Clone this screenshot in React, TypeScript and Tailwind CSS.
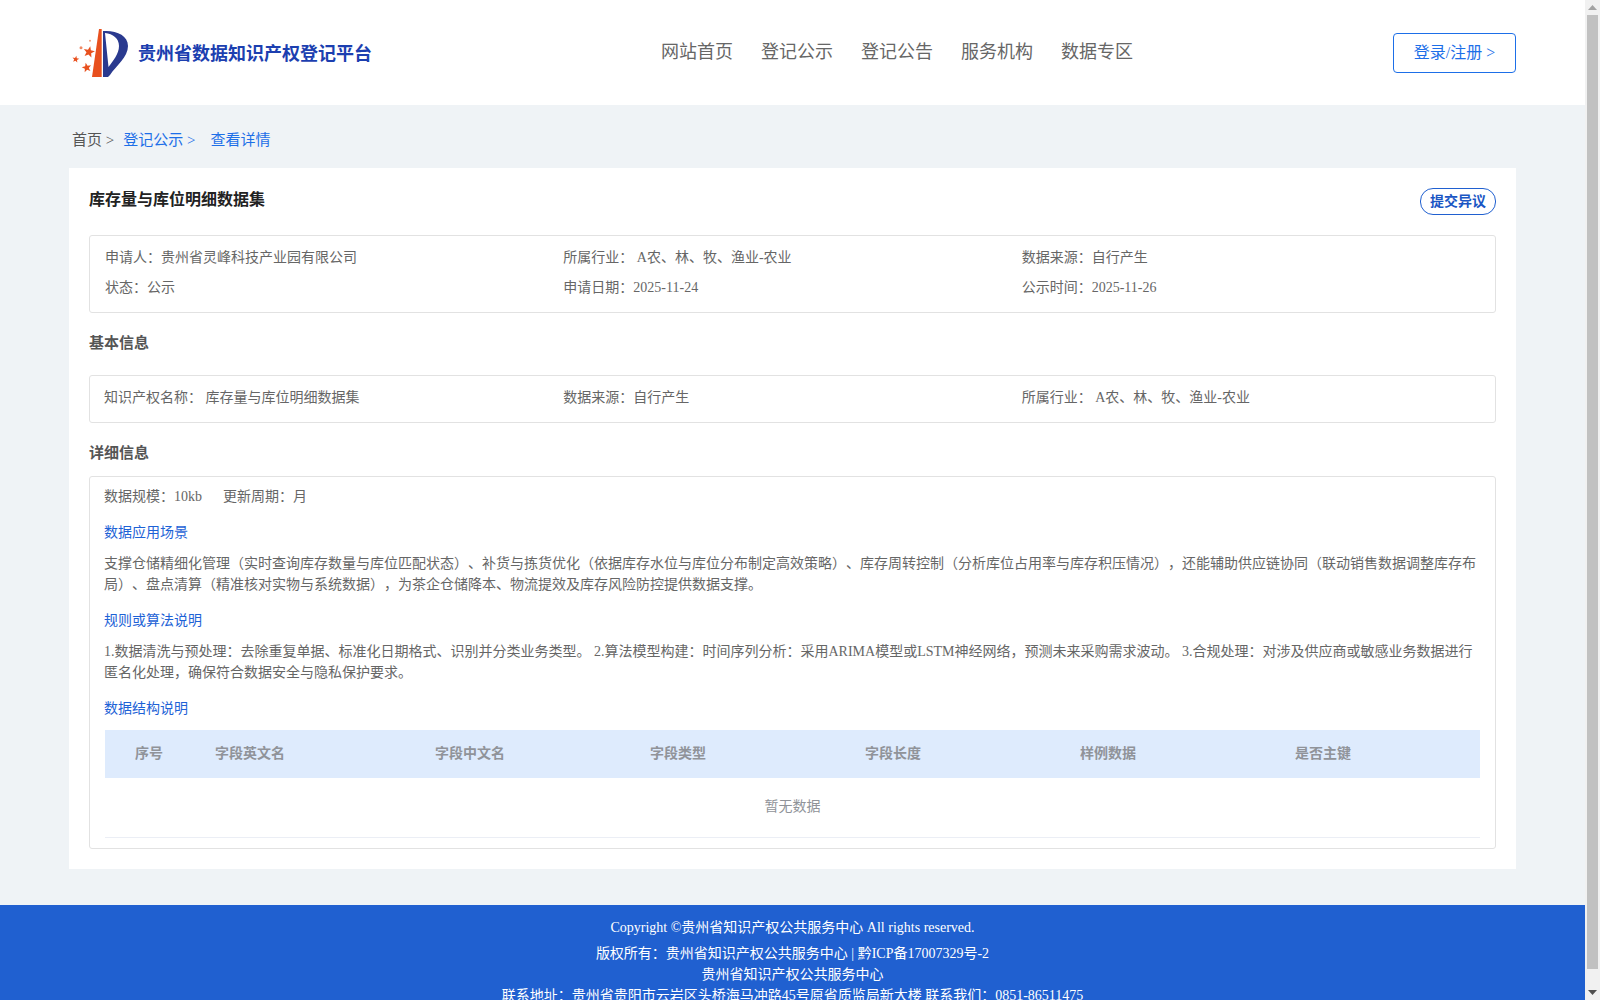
const FONT = "font-['Liberation_Serif','Noto_Sans_CJK_SC',serif]";

function star(cx: number, cy: number, r: number, rot: number) {
  const pts: string[] = [];
  for (let i = 0; i < 10; i++) {
    const rad = i % 2 === 0 ? r : r * 0.42;
    const a = ((-90 + rot + i * 36) * Math.PI) / 180;
    pts.push(`${(cx + rad * Math.cos(a)).toFixed(2)},${(cy + rad * Math.sin(a)).toFixed(2)}`);
  }
  return pts.join(" ");
}

function Logo() {
  return (
    <svg width="60" height="50" viewBox="0 0 60 50" className="shrink-0">
      <path d="M27 1 L29.7 1 L29.7 49 L20 49 Z" fill="#e8501e" />
      <path
        d="M31 3 C44 2 56 7 56 18 C56 29 44 38 38 47 L36 49 L31 49 Z M33 5 L36.5 39 C41 33 47 26 47 18 C47 10 41 6 33 5 Z"
        fillRule="evenodd"
        fill="#2a3a8f"
      />
      <polygon points={star(17, 24, 6, 12)} fill="#e8501e" />
      <polygon points={star(14.7, 39.7, 5, -12)} fill="#e8501e" />
      <polygon points={star(3.7, 31.3, 3.6, 10)} fill="#e8501e" />
      <circle cx="9" cy="19.7" r="1.5" fill="#ef8a66" />
      <circle cx="18" cy="12.7" r="1" fill="#f0a080" />
    </svg>
  );
}

function Scrollbar() {
  return (
    <div className="w-[15px] shrink-0 h-screen bg-[#f1f1f1] flex flex-col">
      <div className="h-[15px] flex items-center justify-center">
        <svg width="9" height="5" viewBox="0 0 9 5">
          <path d="M4.5 0 L9 5 L0 5 Z" fill="#a3a3a3" />
        </svg>
      </div>
      <div className="h-[954px] mx-[2px] bg-[#c1c1c1]" />
      <div className="flex-1 flex items-end justify-center pb-[5px]">
        <svg width="9" height="5" viewBox="0 0 9 5">
          <path d="M0 0 L9 0 L4.5 5 Z" fill="#505050" />
        </svg>
      </div>
    </div>
  );
}

export default function App() {
  return (
    <div className={`h-screen overflow-hidden flex [text-spacing-trim:space-all] ${FONT}`}>
      <div className="flex-1 min-w-0 h-screen overflow-hidden bg-[#eff3f6]">
        <header className="h-[105px] bg-white flex items-center pl-[72px] pr-[69px]">
          <div className="w-[589px] flex items-center gap-[6px]">
            <Logo />
            <span className="text-[18px] font-bold text-[#1c3fb0] mt-[3px]">贵州省数据知识产权登记平台</span>
          </div>
          <nav className="flex gap-7 text-[18px] text-[#666] -mt-[1px]">
            <span>网站首页</span>
            <span>登记公示</span>
            <span>登记公告</span>
            <span>服务机构</span>
            <span>数据专区</span>
          </nav>
          <button className="ml-auto w-[123px] h-10 border border-[#1d6fe8] rounded text-[16px] text-[#1d6fe8]">登录/注册 &gt;</button>
        </header>

        <div className="h-[63px] flex items-center pl-[72px] pt-2 text-[15px] text-[#555]">
          <span>首页 &gt;</span>
          <span className="ml-[9px] text-[#1d6fe8]">登记公示 &gt;</span>
          <span className="ml-[15px] text-[#1d6fe8]">查看详情</span>
        </div>

        <main className="mx-[69px] bg-white px-5 pt-5 pb-5 h-[701px]">
          <div className="flex justify-between h-[47px]">
            <h1 className="text-[16px] font-bold text-[#222] leading-5 pt-[2px]">库存量与库位明细数据集</h1>
            <button className="w-[76px] h-[27px] border border-[#2060d0] rounded-[13px] text-[14px] font-bold text-[#1a56c4]">提交异议</button>
          </div>

          <div className="h-[78px] border border-[#e2e2e2] rounded-[3px] px-[15px] pt-[12px] text-[14px] text-[#666]">
            <div className="grid grid-cols-3 h-[30px] leading-5">
              <span>申请人：贵州省灵峰科技产业园有限公司</span>
              <span>所属行业： A农、林、牧、渔业-农业</span>
              <span>数据来源：自行产生</span>
            </div>
            <div className="grid grid-cols-3 leading-5">
              <span>状态：公示</span>
              <span>申请日期：2025-11-24</span>
              <span>公示时间：2025-11-26</span>
            </div>
          </div>

          <h2 className="text-[15px] font-bold text-[#555] leading-5 mt-5 mb-[22px]">基本信息</h2>

          <div className="h-[48px] border border-[#e2e2e2] rounded-[3px] px-[15px] pb-[4px] text-[14px] text-[#666] grid grid-cols-3 items-center">
            <span className="-ml-px">知识产权名称： 库存量与库位明细数据集</span>
            <span>数据来源：自行产生</span>
            <span>所属行业： A农、林、牧、渔业-农业</span>
          </div>

          <h2 className="text-[15px] font-bold text-[#555] leading-5 mt-[20px] mb-[13px]">详细信息</h2>

          <div className="h-[373px] border border-[#e2e2e2] rounded-[3px] px-[15px] pt-[10px] text-[14px] text-[#666]">
            <div className="leading-5 flex gap-[21px] -ml-px">
              <span>数据规模：10kb</span>
              <span>更新周期：月</span>
            </div>
            <h3 className="mt-[16px] -ml-px leading-5 text-[#1d62d6]">数据应用场景</h3>
            <p className="mt-[10px] -ml-px leading-[21px]">支撑仓储精细化管理（实时查询库存数量与库位匹配状态）、补货与拣货优化（依据库存水位与库位分布制定高效策略）、库存周转控制（分析库位占用率与库存积压情况），还能辅助供应链协同（联动销售数据调整库存布局）、盘点清算（精准核对实物与系统数据），为茶企仓储降本、物流提效及库存风险防控提供数据支撑。</p>
            <h3 className="mt-[16px] -ml-px leading-5 text-[#1d62d6]">规则或算法说明</h3>
            <p className="mt-[10px] -ml-px leading-[21px]">1.数据清洗与预处理：去除重复单据、标准化日期格式、识别并分类业务类型。 2.算法模型构建：时间序列分析：采用ARIMA模型或LSTM神经网络，预测未来采购需求波动。 3.合规处理：对涉及供应商或敏感业务数据进行匿名化处理，确保符合数据安全与隐私保护要求。</p>
            <h3 className="mt-[16px] -ml-px leading-5 text-[#1d62d6]">数据结构说明</h3>
            <div className="mt-[11px] h-12 pb-[2px] bg-[#deebfd] flex items-center font-bold text-[#909399]">
              <span className="w-[110px] pl-[30px]">序号</span>
              <span className="w-[220px]">字段英文名</span>
              <span className="w-[215px]">字段中文名</span>
              <span className="w-[215px]">字段类型</span>
              <span className="w-[215px]">字段长度</span>
              <span className="w-[215px]">样例数据</span>
              <span>是否主键</span>
            </div>
            <div className="h-[60px] pb-[2px] border-b border-[#ebeef5] flex items-center justify-center text-[#909399]">暂无数据</div>
          </div>
        </main>

        <footer className="mt-9 bg-[#2060d0] text-center text-white text-[14px] pt-[14px] pb-3">
          <div className="leading-[18px] mb-[6px]">Copyright ©贵州省知识产权公共服务中心 All rights reserved.</div>
          <div className="leading-[21px]">版权所有：贵州省知识产权公共服务中心 | 黔ICP备17007329号-2</div>
          <div className="leading-[21px]">贵州省知识产权公共服务中心</div>
          <div className="leading-[21px]">联系地址：贵州省贵阳市云岩区头桥海马冲路45号原省质监局新大楼 联系我们：0851-86511475</div>
        </footer>
      </div>
      <Scrollbar />
    </div>
  );
}
